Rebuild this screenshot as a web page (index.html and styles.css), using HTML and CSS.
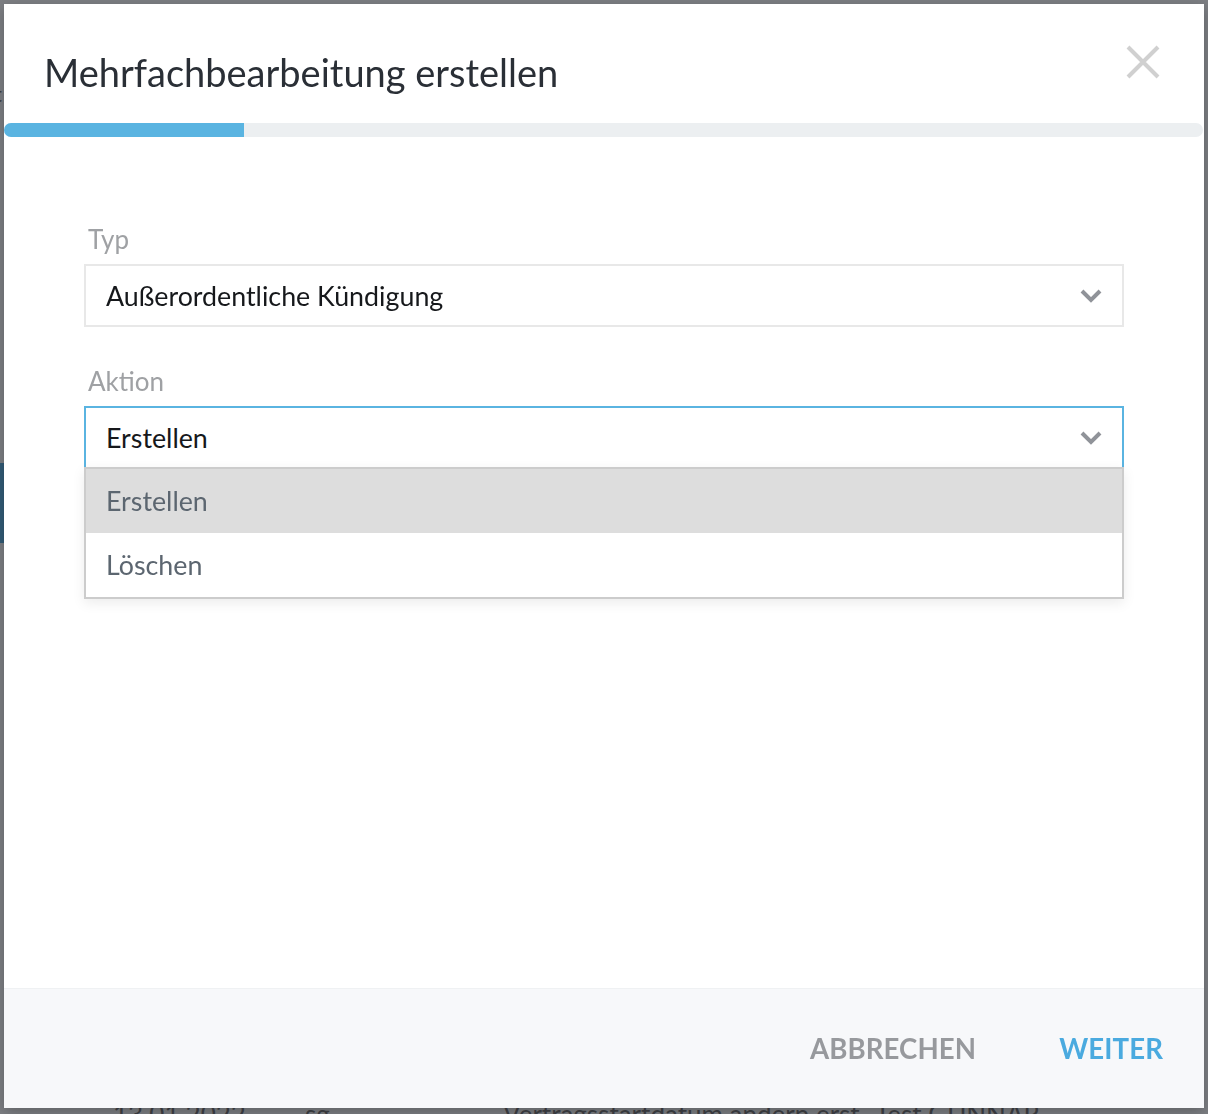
FILE: index.html
```html
<!DOCTYPE html>
<html lang="de">
<head>
<meta charset="utf-8">
<title>Mehrfachbearbeitung erstellen</title>
<link rel="stylesheet" href="styles.css">
</head>
<body>
<div class="page">
  <div class="page-top">t</div>
  <div class="page-nav-active"></div>
  <div class="page-row">
    <span class="c-date">13.01.2022</span>
    <span class="c-user">sg</span>
    <span class="c-desc">Vertragsstartdatum ändern erst</span>
    <span class="c-name">Test GUNNAR</span>
  </div>
</div>

<div class="overlay">
  <div class="modal">
    <div class="modal-header">
      <h1 class="modal-title">Mehrfachbearbeitung erstellen</h1>
      <button class="close-btn" aria-label="Schließen">
        <svg width="34" height="34" viewBox="0 0 34 34"><path d="M2 2 L32 32 M32 2 L2 32" stroke="#d0d0d0" stroke-width="4" fill="none"/></svg>
      </button>
    </div>
    <div class="progress"><div class="progress-fill" style="width: 240px"></div></div>

    <div class="modal-body">
      <div class="field">
        <label class="field-label">Typ</label>
        <div class="select">
          <span class="select-value">Außerordentliche Kündigung</span>
          <svg class="chevron" width="22" height="14" viewBox="0 0 22 14"><path d="M2 2 L11 11 L20 2" stroke="#909399" stroke-width="4" fill="none"/></svg>
        </div>
      </div>
      <div class="field">
        <label class="field-label">Aktion</label>
        <div class="select-wrap">
          <div class="select select-open">
            <span class="select-value">Erstellen</span>
            <svg class="chevron" width="22" height="14" viewBox="0 0 22 14"><path d="M2 2 L11 11 L20 2" stroke="#909399" stroke-width="4" fill="none"/></svg>
          </div>
          <ul class="menu">
            <li class="menu-item is-active">Erstellen</li>
            <li class="menu-item">Löschen</li>
          </ul>
        </div>
      </div>
    </div>

    <div class="modal-footer">
      <button class="btn btn-cancel">ABBRECHEN</button>
      <button class="btn btn-next">WEITER</button>
    </div>
  </div>
</div>
</body>
</html>
```

FILE: styles.css
```css
* { box-sizing: border-box; }

html, body {
  margin: 0;
  padding: 0;
  height: 1114px;
  overflow: hidden;
}

body {
  font-family: "Lato", "Noto Sans", sans-serif;
  background: #f4f6f8;
}

/* underlying page (dimmed by overlay) */
.page {
  height: 1114px;
  display: flex;
  flex-direction: column;
  color: #74767a;
  font-size: 24px;
}
.page-top {
  margin-top: 80px;
  margin-left: -6px;
  font-size: 22px;
  color: #777;
}
.page-nav-active {
  margin-top: 356px;
  width: 5px;
  height: 80px;
  background: #5eaede;
}
.page-row {
  margin-top: auto;
  display: flex;
  align-items: flex-end;
  height: 22px;
  margin-bottom: -16px;
  padding-left: 113px;
  font-size: 26px;
  color: #77787c;
}
.c-date { width: 192px; }
.c-user { width: 198px; }
.c-desc { width: 372px; }

.overlay {
  position: fixed;
  inset: 0;
  background: rgba(8, 10, 16, 0.5);
  padding: 4px 4px 6px 4px;
  display: flex;
}

.modal {
  flex: 1;
  background: #fff;
  display: flex;
  flex-direction: column;
  box-shadow: 0 4px 14px rgba(0, 0, 0, 0.25);
}

.modal-header {
  height: 119px;
  display: flex;
  align-items: flex-start;
  justify-content: space-between;
  padding: 0 44px 0 40px;
}

.modal-title {
  margin: 45px 0 0 0;
  font-size: 38px;
  line-height: 46px;
  font-weight: 400;
  color: #2a2f36;
  letter-spacing: 0;
}

.close-btn {
  margin-top: 41px;
  padding: 0;
  border: 0;
  background: none;
  width: 34px;
  height: 34px;
  cursor: pointer;
}
.close-btn svg { display: block; }

.progress {
  height: 14px;
  background: #eceff1;
  border-radius: 7px;
  margin-right: 1px;
  overflow: hidden;
}
.progress-fill {
  height: 100%;
  background: #5ab4e1;
}

.modal-body {
  flex: 1;
  padding: 85px 80px 0 80px;
  display: flex;
  flex-direction: column;
  gap: 37px;
}

.field-label {
  display: block;
  font-size: 26px;
  line-height: 34px;
  color: #9fa1a4;
  padding-left: 4px;
  margin-bottom: 8px;
}

.select {
  height: 63px;
  border: 2px solid #e8e8e8;
  display: flex;
  align-items: center;
  justify-content: space-between;
  padding: 0 20px 0 20px;
  background: #fff;
}
.select-value {
  font-size: 26.8px;
  color: #16181b;
}
.chevron { display: block; margin-top: 1px; }

.select-wrap { position: relative; }

.select-open {
  border-color: #5ab4e1;
}

.menu {
  position: absolute;
  left: 0;
  right: 0;
  top: 61px;
  margin: 0;
  padding: 0;
  list-style: none;
  background: #fff;
  border: 2px solid #cccccc;
  box-shadow: 0 4px 12px rgba(0, 0, 0, 0.08);
}
.menu-item {
  height: 64px;
  display: flex;
  align-items: center;
  padding-left: 20px;
  font-size: 26.8px;
  color: #5c6670;
}
.menu-item.is-active { background: #dddddd; }

.modal-footer {
  height: 120px;
  background: #f7f8fa;
  border-top: 1px solid #eff1f3;
  display: flex;
  justify-content: flex-end;
  align-items: center;
  gap: 83px;
  padding: 0 41px 0 0;
}

.btn {
  border: 0;
  background: none;
  padding: 0;
  font-family: inherit;
  font-size: 27.6px;
  font-weight: 700;
  letter-spacing: 0.1px;
  cursor: pointer;
}
.btn-cancel { color: #97999d; }
.btn-next { color: #4aaadf; }
```
